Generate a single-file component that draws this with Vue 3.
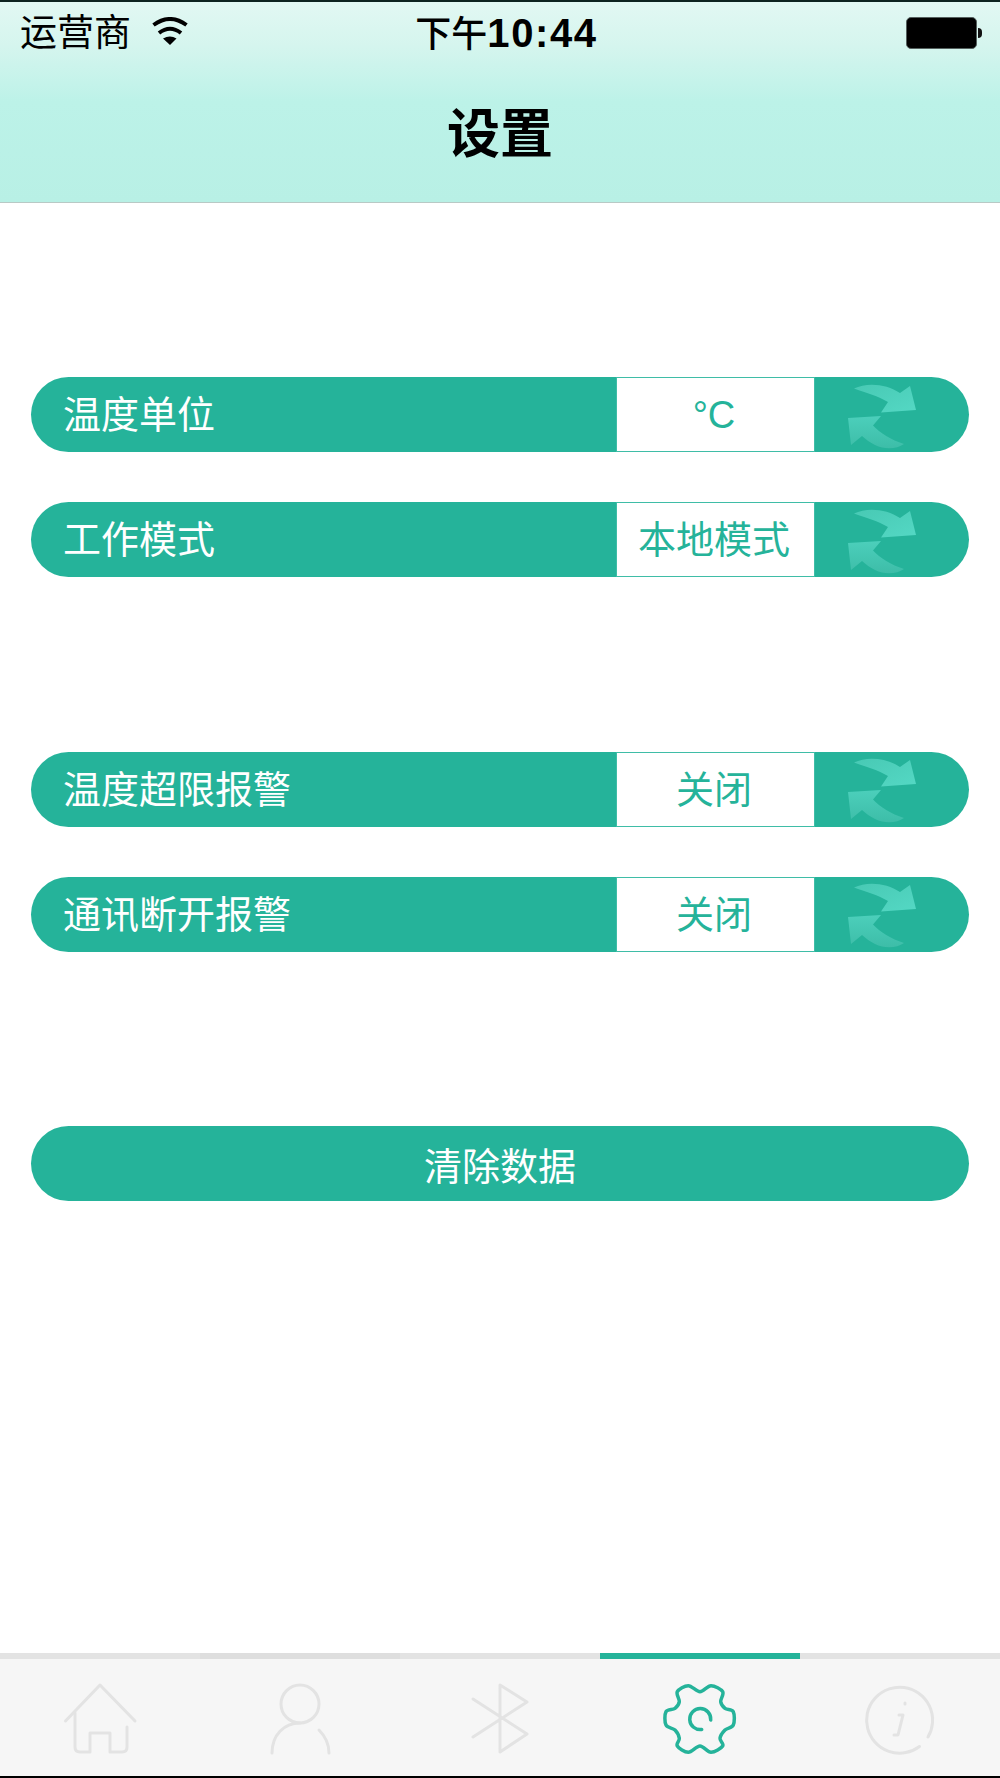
<template>
  <div class="page">
    <header class="nav">
      <div class="status">
        <div class="status-left">
          <span class="carrier">运营商</span>
          <svg class="wifi" viewBox="0 0 38 28" fill="none" stroke="#000" stroke-width="4">
            <path d="M2.5 8Q19 -4 35.5 8" />
            <path d="M8 16Q19 7.5 30 16" />
            <path d="M12 21.5L19 28L25.5 21.5Q19 17.5 12 21.5Z" fill="#000" stroke="none" />
          </svg>
        </div>
        <span class="time"><span class="time-cjk">下午</span>10:44</span>
        <div class="battery"><i class="battery-body"></i><i class="battery-nub"></i></div>
      </div>
      <h1 class="title">设置</h1>
    </header>

    <main class="content">
      <section v-for="(group, i) in groups" :key="i" class="group">
        <div v-for="row in group" :key="row.label" class="row">
          <span class="row-label">{{ row.label }}</span>
          <span class="row-value">{{ row.value }}</span>
          <div class="row-switch">
            <svg class="swap" viewBox="0 0 70 62">
              <defs>
                <linearGradient id="swap-top" x1="0" y1="0" x2="1" y2="1">
                  <stop offset="0" stop-color="#48c9b4" />
                  <stop offset="1" stop-color="#54d8c4" />
                </linearGradient>
                <linearGradient id="swap-bottom" x1="0" y1="0" x2="0" y2="1">
                  <stop offset="0" stop-color="#4ccfbb" />
                  <stop offset="1" stop-color="#3dbda8" />
                </linearGradient>
              </defs>
              <path fill="url(#swap-top)" d="M7 4.5C20 -2 40 0 53 9L63 2L69 26L34 28.5L41 18C31 12 20 9 7 4.5Z" />
              <path fill="url(#swap-bottom)" d="M1 34L34 32L26 41.5C33 49 44 56 57 60C50 65 38 66 28 61C23 58.5 19 55.5 15 52L4 61Z" />
            </svg>
          </div>
        </div>
      </section>
      <button class="clear">清除数据</button>
    </main>

    <nav class="tabs">
      <div v-for="tab in tabs" :key="tab" class="tab" :class="{ active: tab === 'gear', dim: tab === 'user' }">
        <svg class="tab-icon" :class="{ 'tab-icon-gear': tab === 'gear' }" viewBox="0 0 80 80" fill="none" stroke-linecap="round" stroke-linejoin="round">
          <template v-if="tab === 'home'">
            <path d="M5.5 41L40 5L75 41" />
            <path d="M15 33V67Q15 72 20 72H30V53H50V72H62Q67 72 67 67V47" />
          </template>
          <template v-else-if="tab === 'user'">
            <circle cx="40" cy="24" r="19" />
            <path d="M12 73C12 55 24 43 40 43" />
            <path d="M59 50C65 56 69 63 69 73" />
          </template>
          <path v-else-if="tab === 'bluetooth'" d="M13 19L67 54L40 72V5L67 22L13 57" />
          <template v-else-if="tab === 'gear'">
            <path :d="gearPath" />
            <path d="M50.7 40A10.5 10.5 0 1 0 41.7 49.5" />
          </template>
          <template v-else>
            <path d="M68 57A33 33 0 1 0 59.5 66.5" />
            <path d="M39 35H43L38 55H34" />
            <path d="M45 23V24" />
          </template>
        </svg>
      </div>
    </nav>
  </div>
</template>

<script setup>
const groups = [
  [
    { label: '温度单位', value: '°C' },
    { label: '工作模式', value: '本地模式' },
  ],
  [
    { label: '温度超限报警', value: '关闭' },
    { label: '通讯断开报警', value: '关闭' },
  ],
]

const tabs = ['home', 'user', 'bluetooth', 'gear', 'info']

// outline of the gear, traced off the screenshot and smoothed into curves
const gearPoints = [
  [40, 11.7], [51, 5.7], [62.7, 11.7], [60.7, 21.7], [65, 28.3], [73.3, 31.7],
  [73.3, 45], [65, 50], [60, 58.3], [62.7, 66], [51, 72.3], [40, 66],
  [28.3, 72.3], [17.3, 66], [19.3, 58.3], [15, 50], [6, 45], [6, 31.7],
  [15, 28.3], [19.3, 21.7], [17.3, 11.7], [28.3, 5.7],
]

const gearPath = gearPoints.reduce((d, p, i, pts) => {
  const n = pts.length
  const p0 = pts[(i - 1 + n) % n]
  const p2 = pts[(i + 1) % n]
  const p3 = pts[(i + 2) % n]
  const c1 = [p[0] + (p2[0] - p0[0]) / 6, p[1] + (p2[1] - p0[1]) / 6]
  const c2 = [p2[0] - (p3[0] - p[0]) / 6, p2[1] - (p3[1] - p[1]) / 6]
  return `${d}C${c1[0]} ${c1[1]} ${c2[0]} ${c2[1]} ${p2[0]} ${p2[1]}`
}, `M${gearPoints[0][0]} ${gearPoints[0][1]}`) + 'Z'
</script>

<style scoped>
.page {
  width: 1000px;
  height: 1778px;
  display: flex;
  flex-direction: column;
  background: #fff;
  font-family: "Liberation Sans", "Noto Sans CJK SC", sans-serif;
  border-bottom: 2px solid #000;
  box-sizing: border-box;
  overflow: hidden;
}

.nav {
  height: 203px;
  box-sizing: border-box;
  border-top: 2px solid #0d2320;
  border-bottom: 1px solid #b9c9c5;
  background: linear-gradient(180deg, #e2f8f3 0%, #d5f5ee 22%, #bcf2e8 50%, #b8f0e5 100%);
}

.status {
  height: 62px;
  display: grid;
  grid-template-columns: 1fr auto 1fr;
  align-items: center;
  padding: 0 18px 0 20px;
  color: #000;
}

.status-left {
  display: flex;
  align-items: center;
  gap: 20px;
}

.carrier {
  font-size: 37px;
  line-height: 1;
}

.wifi {
  width: 38px;
  height: 28px;
  margin-top: -4px;
}

.time {
  margin-left: 11px;
  font-size: 40px;
  line-height: 1;
  font-weight: 700;
  letter-spacing: 1.6px;
  white-space: nowrap;
}

.time-cjk {
  font-size: 36px;
  font-weight: 500;
  letter-spacing: 0;
}

.battery {
  justify-self: end;
  display: flex;
  align-items: center;
  gap: 1px;
}

.battery-body {
  width: 71px;
  height: 32px;
  box-sizing: border-box;
  background: #000;
  border: 1px solid #55605e;
  border-radius: 5px;
}

.battery-nub {
  width: 4px;
  height: 10px;
  background: #111;
  border-radius: 0 4px 4px 0;
}

.title {
  margin: 28px 0 0;
  text-align: center;
  font-family: "Noto Sans CJK SC", sans-serif;
  font-size: 53px;
  line-height: 76px;
  font-weight: 700;
  color: #000;
}

.content {
  flex: 1;
  padding: 174px 31px 0;
  display: flex;
  flex-direction: column;
  gap: 174.5px;
}

.group {
  display: flex;
  flex-direction: column;
  gap: 50px;
}

.row {
  height: 75px;
  display: flex;
  align-items: stretch;
  background: #25b39a;
  border-radius: 38px;
  color: #fff;
  font-size: 38px;
}

.row-label {
  width: 585px;
  padding-left: 32px;
  box-sizing: border-box;
  line-height: 77px;
}

.row-value {
  width: 199px;
  padding-right: 3px;
  box-sizing: border-box;
  border: 1px solid #3fbda7;
  background: #fff;
  color: #25b39a;
  line-height: 75px;
  text-align: center;
}

.row-switch {
  flex: 1;
  display: flex;
  align-items: center;
  padding-left: 32px;
}

.swap {
  width: 70px;
  height: 62px;
  overflow: visible;
}

.clear {
  height: 75px;
  padding: 0;
  border: 0;
  background: #25b39a;
  border-radius: 38px;
  color: #fff;
  font-family: inherit;
  font-size: 38px;
}

.tabs {
  display: flex;
  height: 123px;
  background: #f6f6f6;
}

.tab {
  flex: 1;
  box-sizing: border-box;
  border-top: 6px solid #e3e3e3;
  display: flex;
  justify-content: center;
  padding-top: 21px;
  stroke: #e3e3e3;
}

.tab.dim {
  border-top-color: #dedede;
}

.tab.active {
  border-top-color: #25b39a;
  stroke: #25b39a;
}

.tab-icon {
  width: 80px;
  height: 80px;
  stroke-width: 3;
}

.tab-icon-gear {
  stroke-width: 3.5;
}
</style>

<style>
html,
body {
  margin: 0;
  background: #fff;
}
</style>
